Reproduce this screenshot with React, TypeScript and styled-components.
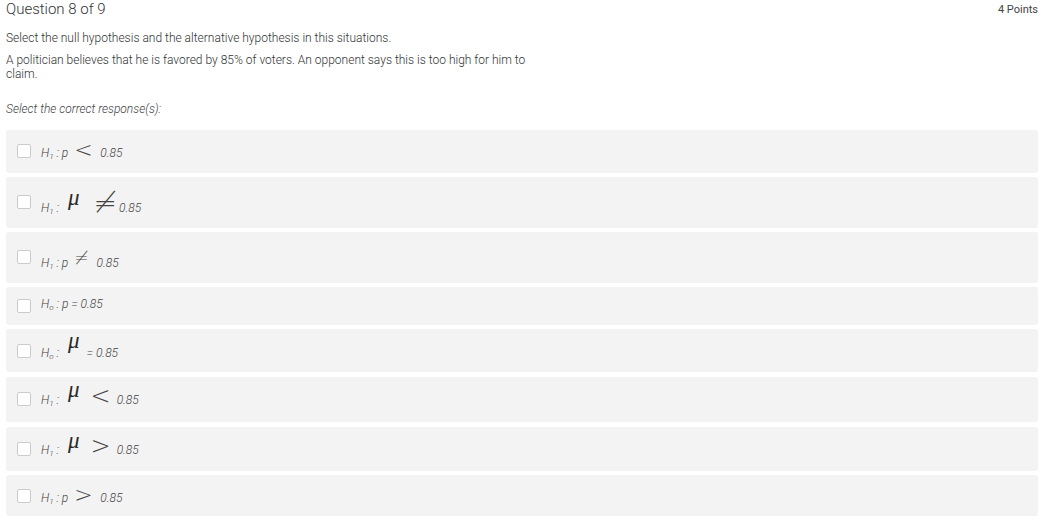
import React from "react";
import styled, { createGlobalStyle } from "styled-components";

const Global = createGlobalStyle`
  html, body { margin: 0; padding: 0; background: #fff; }
  body { font-family: Roboto, "Liberation Sans", Arial, sans-serif; color: #333; }
`;

const Page = styled.div`
  padding: 0 6px;
  width: 1044px;
  box-sizing: border-box;
`;

const Header = styled.header`
  display: flex;
  justify-content: space-between;
  align-items: flex-start;
`;

const Title = styled.h1`
  margin: 0;
  font-size: 15px;
  line-height: 18px;
  font-weight: 300;
  color: #333;
`;

const Points = styled.span`
  font-size: 11px;
  line-height: 16px;
  margin-top: 2px;
  color: #444;
`;

const Para = styled.p<{ $mt: number; $italic?: boolean }>`
  margin: ${(p) => p.$mt}px 0 0 0;
  max-width: 535px;
  font-size: 12px;
  font-weight: 300;
  line-height: 14px;
  color: ${(p) => (p.$italic ? "#444" : "#333")};
  font-style: ${(p) => (p.$italic ? "italic" : "normal")};
`;

const Options = styled.div`
  margin-top: 13.6px;
  display: flex;
  flex-direction: column;
  gap: 4.4px;
`;

const Option = styled.label<{ $h: number }>`
  display: flex;
  align-items: center;
  height: ${(p) => p.$h}px;
  background: #f3f3f3;
  border-radius: 3px;
  padding-left: 11px;
  box-sizing: border-box;
`;

const Box = styled.span`
  width: 14px;
  height: 14px;
  box-sizing: border-box;
  border: 1px solid #cbcbcb;
  border-radius: 2px;
  background: #fff;
  flex: none;
`;

const Formula = styled.span<{ $top: number }>`
  align-self: flex-start;
  margin: ${(p) => p.$top}px 0 0 10px;
  display: block;
  height: 24px;
  font-size: 12px;
  font-weight: 300;
  font-style: italic;
  color: #444;
  line-height: 24px;
  white-space: pre;
`;

const Sub = styled.span`
  font-size: 8px;
  line-height: 0;
  vertical-align: -2px;
`;

const Rel = styled.span<{ $size: number; $lift?: number; $ml?: number; $mr?: number }>`
  font-family: "DejaVu Sans", sans-serif;
  font-style: normal;
  font-weight: 200;
  font-size: ${(p) => p.$size}px;
  line-height: 0;
  vertical-align: ${(p) => p.$lift ?? 0}px;
  color: #444;
  margin-left: ${(p) => p.$ml ?? 0}px;
  margin-right: ${(p) => p.$mr ?? 0}px;
`;

const Mu = styled.span<{ $lift: number; $mr: number }>`
  font-family: "Liberation Serif", serif;
  font-style: italic;
  font-weight: 400;
  font-size: 23px;
  line-height: 0;
  vertical-align: ${(p) => p.$lift}px;
  color: #2a2a2a;
  margin-left: 9px;
  margin-right: ${(p) => p.$mr}px;
`;

const H = ({ s }: { s: string }) => (
  <>
    H<Sub>{s}</Sub>
  </>
);

export default function App() {
  return (
    <Page>
      <Global />
      <Header>
        <Title>Question 8 of 9</Title>
        <Points>4 Points</Points>
      </Header>
      <Para $mt={13}>
        Select the null hypothesis and the alternative hypothesis in this situations.
      </Para>
      <Para $mt={8.4}>
        A politician believes that he is favored by 85% of voters. An opponent says this is too high for him to claim.
      </Para>
      <Para $mt={21} $italic>
        Select the correct response(s):
      </Para>
      <Options>
        <Option $h={42.7}>
          <Box />
          <Formula $top={10.9}>
            <H s="1" /> : p<Rel $size={22} $ml={6} $mr={7.6}>{"<"}</Rel>0.85
          </Formula>
        </Option>
        <Option $h={50.7}>
          <Box />
          <Formula $top={18.9}>
            <H s="1" /> :<Mu $lift={7} $mr={14}>μ</Mu>
            <Rel $size={28} $mr={2}>{"≠"}</Rel>0.85
          </Formula>
        </Option>
        <Option $h={50.7}>
          <Box />
          <Formula $top={18.9}>
            <H s="1" /> : p<Rel $size={17} $lift={3} $ml={6} $mr={8}>{"≠"}</Rel>0.85
          </Formula>
        </Option>
        <Option $h={37.3}>
          <Box />
          <Formula $top={4.9}>
            <H s="o" /> : p = 0.85
          </Formula>
        </Option>
        <Option $h={43.3}>
          <Box />
          <Formula $top={11.9}>
            <H s="o" /> :<Mu $lift={9} $mr={7}>μ</Mu>= 0.85
          </Formula>
        </Option>
        <Option $h={45.7}>
          <Box />
          <Formula $top={11.9}>
            <H s="1" /> :<Mu $lift={7} $mr={11}>μ</Mu>
            <Rel $size={24} $mr={6}>{"<"}</Rel>0.85
          </Formula>
        </Option>
        <Option $h={44}>
          <Box />
          <Formula $top={10.9}>
            <H s="1" /> :<Mu $lift={6} $mr={11}>μ</Mu>
            <Rel $size={24} $mr={6}>{">"}</Rel>0.85
          </Formula>
        </Option>
        <Option $h={41.3}>
          <Box />
          <Formula $top={10.9}>
            <H s="1" /> : p<Rel $size={22} $ml={6} $mr={7.6}>{">"}</Rel>0.85
          </Formula>
        </Option>
      </Options>
    </Page>
  );
}
